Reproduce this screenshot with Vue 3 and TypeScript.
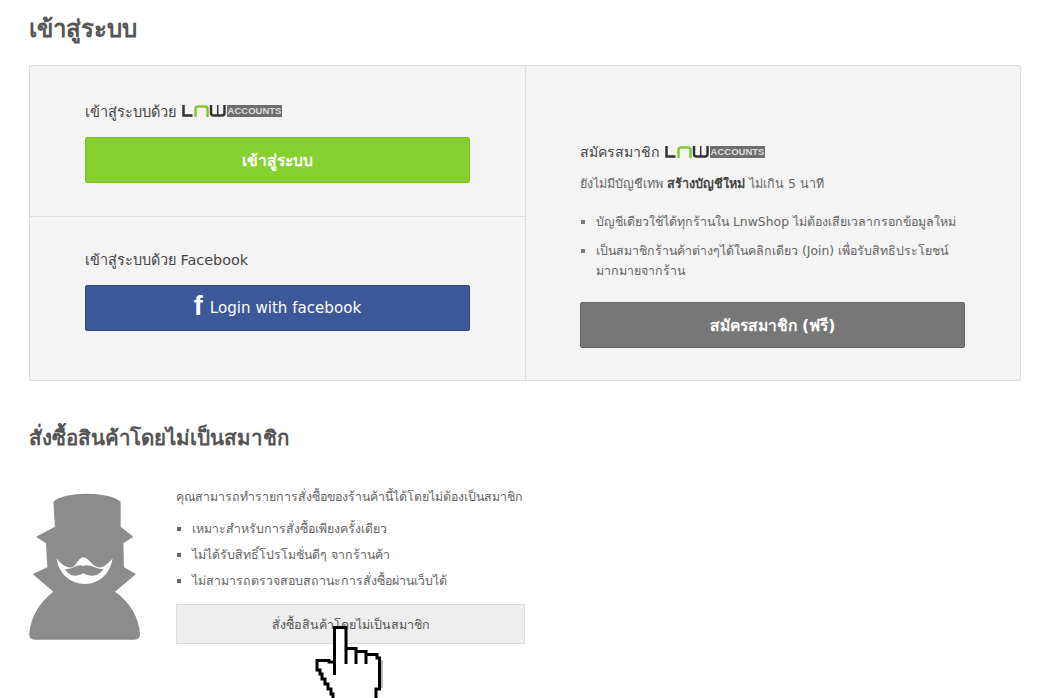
<script setup lang="ts">
interface Perk {
  text: string
}

const memberPerks: Perk[] = [
  { text: 'บัญชีเดียวใช้ได้ทุกร้านใน LnwShop ไม่ต้องเสียเวลากรอกข้อมูลใหม่' },
  { text: 'เป็นสมาชิกร้านค้าต่างๆได้ในคลิกเดียว (Join) เพื่อรับสิทธิประโยชน์มากมายจากร้าน' }
]

const guestNotes: Perk[] = [
  { text: 'เหมาะสำหรับการสั่งซื้อเพียงครั้งเดียว' },
  { text: 'ไม่ได้รับสิทธิ์โปรโมชั่นดีๆ จากร้านค้า' },
  { text: 'ไม่สามารถตรวจสอบสถานะการสั่งซื้อผ่านเว็บได้' }
]
</script>

<template>
  <div class="page">
    <h1 class="title">เข้าสู่ระบบ</h1>

    <div class="login-box">
      <div class="col-left">
        <section class="login-part part-lnw">
          <div class="part-label">
            เข้าสู่ระบบด้วย
            <span class="lnw-logo">
              <svg width="44" height="12" viewBox="0 0 44 12" fill="none" stroke-width="2.500">
                <path d="M1.500 0V10.500H10.500" stroke="#333" />
                <path d="M13.500 12V4Q13.500 1.500 16 1.500H23Q25.500 1.500 25.500 4V12" stroke="#86c82f" />
                <path d="M29 0V8Q29 10.500 31.500 10.500H40Q42.500 10.500 42.500 8V0" stroke="#333" />
                <path d="M35.700 0V10" stroke="#333" stroke-width="1.500" />
              </svg>
              <span class="accounts">ACCOUNTS</span>
            </span>
          </div>
          <button type="button" class="btn btn-green">เข้าสู่ระบบ</button>
        </section>
        <section class="login-part part-fb">
          <div class="part-label">เข้าสู่ระบบด้วย Facebook</div>
          <button type="button" class="btn btn-fb"><span class="fb-f">f</span><span>Login with facebook</span></button>
        </section>
      </div>

      <div class="col-right">
        <div class="part-label register-label">
          สมัครสมาชิก
          <span class="lnw-logo">
            <svg width="44" height="12" viewBox="0 0 44 12" fill="none" stroke-width="2.500">
              <path d="M1.500 0V10.500H10.500" stroke="#333" />
              <path d="M13.500 12V4Q13.500 1.500 16 1.500H23Q25.500 1.500 25.500 4V12" stroke="#86c82f" />
              <path d="M29 0V8Q29 10.500 31.500 10.500H40Q42.500 10.500 42.500 8V0" stroke="#333" />
              <path d="M35.700 0V10" stroke="#333" stroke-width="1.500" />
            </svg>
            <span class="accounts">ACCOUNTS</span>
          </span>
        </div>
        <p class="register-sub">ยังไม่มีบัญชีเทพ <b>สร้างบัญชีใหม่</b> ไม่เกิน 5 นาที</p>
        <ul class="perks">
          <li v-for="perk in memberPerks" :key="perk.text">{{ perk.text }}</li>
        </ul>
        <button type="button" class="btn btn-gray">สมัครสมาชิก (ฟรี)</button>
      </div>
    </div>

    <h2 class="guest-title">สั่งซื้อสินค้าโดยไม่เป็นสมาชิก</h2>

    <div class="guest">
      <svg class="spy" width="112" height="147" viewBox="27 39 336 441">
        <!-- hat, head, collar and body -->
        <path fill="#8c8c8c" d="M100 65C130 33 270 33 302 65L302 140L340 170L310 190L312 262L348 282L285 335C330 365 358 415 360 462C360 475 352 479 340 479L45 479C32 479 27 472 28 460C32 410 60 365 100 335L38 282L82 262L78 190L48 170L105 140Z" />
        <!-- smile -->
        <path fill="#fff" d="M110 235C125 255 140 265 155 262C170 258 175 232 190 232C205 232 215 258 235 262C250 265 265 250 278 235C270 285 235 312 195 312C150 312 115 280 110 235Z" />
        <!-- moustache -->
        <path fill="#8c8c8c" d="M190 258C175 250 165 265 135 268C145 285 165 295 190 280C215 295 240 285 250 268C225 265 205 250 190 258Z" />
      </svg>

      <div class="guest-body">
        <p class="guest-intro">คุณสามารถทำรายการสั่งซื้อของร้านค้านี้ได้โดยไม่ต้องเป็นสมาชิก</p>
        <ul class="guest-list">
          <li v-for="note in guestNotes" :key="note.text">{{ note.text }}</li>
        </ul>
        <div class="guest-btn">สั่งซื้อสินค้าโดยไม่เป็นสมาชิก</div>
      </div>
    </div>

    <svg class="hand" width="70" height="74" viewBox="0 0 70 74">
      <path fill="#fff" d="M20 3H32V24H42V27H52V30H63V33H66V65H62V74H17V70H14V65H11V60H8V55H6V46H3V37H14L20 40Z" />
      <path fill="none" stroke="#bbb" stroke-width="2" d="M68 36V64" />
      <path fill="none" stroke="#000" stroke-width="3" d="M20.500 51V3.500H32V40M32 24.500H42V40M42 27.500H52V40M52 30.500H63V34H65.500V65H62V74M20.500 38H15V36.500H3V46H6V50H8V55H11V60H14V65H17V70H19V74" />
    </svg>
  </div>
</template>

<style>
html, body {
  margin: 0;
  background: #fff;
  overflow: hidden;
}
</style>

<style scoped>
.page {
  position: relative;
  box-sizing: border-box;
  width: 1041px;
  height: 698px;
  padding: 0 20px 0 29px;
  overflow: hidden;
  font-family: Tahoma, "DejaVu Sans", "Noto Sans", sans-serif;
  color: #555;
}

.title {
  margin: 0;
  height: 65px;
  padding-top: 13px;
  box-sizing: border-box;
  font-size: 24px;
  line-height: 32px;
  font-weight: bold;
  color: #555;
}

.login-box {
  display: flex;
  box-sizing: border-box;
  height: 316px;
  background: #f4f4f4;
  border: 1px solid #ddd;
  border-radius: 2px;
}

.col-left {
  box-sizing: border-box;
  width: 496px;
  border-right: 1px solid #ddd;
}

.login-part {
  box-sizing: border-box;
  padding: 0 55px;
}

.part-lnw {
  height: 151px;
  padding-top: 33px;
  border-bottom: 1px solid #ddd;
}

.part-fb {
  padding-top: 30px;
}

.part-fb .part-label {
  margin-bottom: 14px;
  font-size: 14.400px;
}

.part-label {
  display: flex;
  align-items: center;
  gap: 5px;
  height: 24px;
  margin-bottom: 14px;
  font-size: 14.600px;
  color: #444;
  white-space: nowrap;
}

.lnw-logo {
  display: inline-flex;
  align-items: center;
  gap: 1px;
}

.accounts {
  display: inline-block;
  width: 55px;
  height: 12px;
  background: #6e6e6e;
  color: #ddd;
  font-family: "Liberation Sans", Arial, sans-serif;
  font-size: 9.500px;
  font-weight: bold;
  line-height: 12px;
  text-align: center;
}

.btn {
  display: block;
  box-sizing: border-box;
  width: 385px;
  height: 46px;
  padding: 0;
  border-radius: 2px;
  color: #fff;
  font-family: inherit;
  font-size: 15.600px;
  font-weight: bold;
}

.btn-green {
  background: #86d02f;
  border: 1px solid #7cc12b;
}

.btn-fb {
  display: flex;
  align-items: center;
  justify-content: center;
  gap: 7px;
  background: #3b5998;
  border: 1px solid #30497d;
  font-size: 15.100px;
  font-weight: normal;
}

.fb-f {
  margin-top: -4px;
  font-family: "Liberation Sans", Arial, sans-serif;
  font-size: 27px;
  font-weight: bold;
  line-height: 1;
}

.btn-gray {
  background: #777;
  border: 1px solid #666;
}

.col-right {
  flex: 1;
  padding: 74px 55px 0 54px;
}

.register-label {
  margin-bottom: 10px;
  font-size: 14.100px;
}

.register-sub {
  margin: 0 0 18px;
  font-size: 12.600px;
  line-height: 20px;
  color: #666;
}

.register-sub b {
  color: #444;
}

.perks {
  margin: 0 0 21px;
  padding: 0 0 0 16px;
  list-style: square;
  font-size: 12.400px;
  line-height: 20px;
  color: #666;
}

.perks li + li {
  margin-top: 9px;
}

.perks li::marker {
  color: #777;
}

.guest-title {
  margin: 0;
  padding-top: 42px;
  height: 101px;
  box-sizing: border-box;
  font-size: 20.500px;
  letter-spacing: -0.070px;
  line-height: 30px;
  font-weight: bold;
  color: #555;
}

.guest {
  display: flex;
  gap: 35px;
}

.spy {
  flex: none;
  margin-top: 11px;
}

.guest-body {
  width: 349px;
  margin-top: 5px;
  font-size: 12.400px;
  color: #666;
}

.guest-intro {
  margin: 0 0 12px;
  line-height: 20px;
  white-space: nowrap;
}

.guest-list {
  margin: 0 0 13px;
  padding: 0 0 0 16px;
  list-style: square;
  line-height: 20px;
}

.guest-list li + li {
  margin-top: 6px;
}

.guest-btn {
  box-sizing: border-box;
  height: 40px;
  background: #eee;
  border: 1px solid #ddd;
  text-align: center;
  font-size: 12.500px;
  line-height: 40px;
  color: #555;
}

/* mouse pointer lying over the guest button */
.hand {
  position: absolute;
  left: 314px;
  top: 624px;
}
</style>
